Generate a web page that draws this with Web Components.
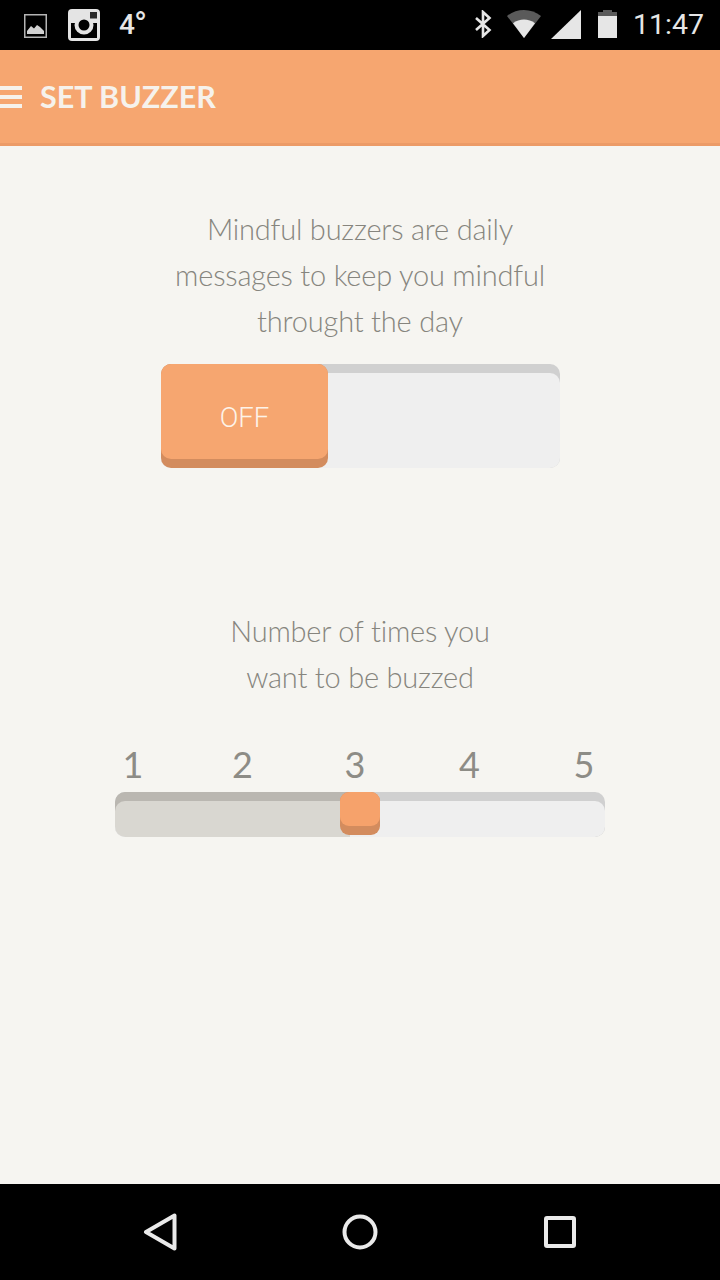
<!DOCTYPE html>
<html>
<head>
<meta charset="utf-8">
<title>Set Buzzer</title>
<style>
    html, body { margin: 0; padding: 0; background: #f6f5f1; }
    body { width: 720px; height: 1280px; overflow: hidden; }
</style>
</head>
<body>
<buzzer-screen>
    <status-bar></status-bar>
    <app-bar>SET BUZZER</app-bar>
    <main-area>
        <buzzer-message style="margin-top: 60px">Mindful buzzers are daily<br>messages to keep you mindful<br>throught the day</buzzer-message>
        <buzzer-toggle style="margin-top: 20px">OFF</buzzer-toggle>
        <buzzer-message style="margin-top: 140px">Number of times you<br>want to be buzzed</buzzer-message>
        <buzzer-slider style="margin-top: 38px"></buzzer-slider>
    </main-area>
    <nav-bar></nav-bar>
</buzzer-screen>
<script>
class BuzzerScreen extends HTMLElement {
    constructor() {
        super();
        this.attachShadow({ mode: 'open' });
        this.shadowRoot.innerHTML = `
            <style>
                :host {
                    display: flex;
                    flex-direction: column;
                    width: 720px;
                    height: 1280px;
                    background: #f6f5f1;
                }
            </style>
            <slot></slot>
        `;
    }
}

class StatusBar extends HTMLElement {
    constructor() {
        super();
        this.attachShadow({ mode: 'open' });
        this.shadowRoot.innerHTML = `
            <style>
                :host {
                    display: flex;
                    align-items: center;
                    height: 50px;
                    background: #000;
                    color: #e6e6e6;
                    font-family: Roboto, sans-serif;
                    flex: none;
                }
                svg { display: block; flex: none; }
                .left { display: flex; align-items: center; padding-left: 24px; }
                .temp { margin-left: 19px; font-size: 28px; font-weight: 500; line-height: 50px; white-space: nowrap; }
                .temp span { font-size: 35px; font-weight: 400; margin-left: -1px; line-height: 1; vertical-align: -3px; }
                .right { display: flex; align-items: center; margin-left: auto; padding-right: 16px; }
                .right svg { margin-top: -2px; }
                .time { margin-left: 16px; font-size: 28.5px; line-height: 50px; }
            </style>
            <div class="left">
                <svg width="23" height="24" viewBox="0 0 23 24" style="margin-top: 1px">
                    <rect x="0.75" y="0.75" width="21.5" height="22.5" fill="none" stroke="#b4b4b4" stroke-width="1.5"/>
                    <path d="M3 20v-3l4-5 3 2.500 3-3.500 3 2 4 4v3z" fill="#d2d2d2"/>
                </svg>
                <svg width="32" height="32" viewBox="0 0 32 32" style="margin-left: 21px">
                    <rect width="32" height="32" rx="4" fill="#e4e4e4"/>
                    <rect x="3" y="14" width="26" height="15" fill="#000"/>
                    <circle cx="16" cy="16" r="9.500" fill="#e4e4e4"/>
                    <circle cx="16" cy="16" r="5.500" fill="#000"/>
                    <rect x="22" y="3" width="7" height="6.500" fill="#2a2a2a"/>
                </svg>
                <span class="temp">4<span>°</span></span>
            </div>
            <div class="right">
                <svg width="18" height="28" viewBox="0 0 18 28">
                    <path d="M2 8l13.500 12L9 26V2l6.500 6L2 20" fill="none" stroke="#e6e6e6" stroke-width="2.600"/>
                </svg>
                <svg width="34" height="28" viewBox="0 0 34 28" style="margin-left: 15px">
                    <path d="M0 6C9.500-2 24.500-2 34 6L17 28z" fill="#5a5a5a"/>
                    <path d="M6 13.300c6.500-5 15.500-5 22 0L17 28z" fill="#e6e6e6"/>
                </svg>
                <svg width="30" height="29" viewBox="0 0 30 29" style="margin-left: 10px">
                    <path d="M30 0v29H0z" fill="#e6e6e6"/>
                </svg>
                <svg width="19" height="28" viewBox="0 0 19 28" style="margin-left: 17px">
                    <path d="M5 0h9v2H5z" fill="#5a5a5a"/>
                    <path d="M0 2h19v4H0z" fill="#5a5a5a"/>
                    <path d="M0 6h19v22H0z" fill="#e6e6e6"/>
                </svg>
                <span class="time">11:47</span>
            </div>
        `;
    }
}

class AppBar extends HTMLElement {
    constructor() {
        super();
        this.attachShadow({ mode: 'open' });
        this.shadowRoot.innerHTML = `
            <style>
                :host {
                    display: flex;
                    align-items: center;
                    gap: 18px;
                    height: 93px;
                    background: #f6a670;
                    border-bottom: 3px solid #ec9b67;
                    color: #f6f2ec;
                    font-family: Lato, sans-serif;
                    font-weight: 700;
                    font-size: 30.5px;
                    flex: none;
                }
                .menu { display: flex; flex-direction: column; gap: 5px; width: 22px; margin-top: 1px; }
                .menu i { display: block; height: 4px; background: #f6f2ec; }
                .label { margin-top: -2px; }
            </style>
            <div class="menu"><i></i><i></i><i></i></div>
            <div class="label"><slot></slot></div>
        `;
    }
}

class MainArea extends HTMLElement {
    constructor() {
        super();
        this.attachShadow({ mode: 'open' });
        this.shadowRoot.innerHTML = `
            <style>
                :host {
                    display: flex;
                    flex-direction: column;
                    align-items: center;
                    flex: 1;
                }
            </style>
            <slot></slot>
        `;
    }
}

class BuzzerMessage extends HTMLElement {
    constructor() {
        super();
        this.attachShadow({ mode: 'open' });
        this.shadowRoot.innerHTML = `
            <style>
                :host {
                    display: block;
                    text-align: center;
                    color: #86857e;
                    font-family: Lato, sans-serif;
                    font-weight: 300;
                    font-size: 29px;
                    letter-spacing: -0.2px;
                    line-height: 46px;
                    white-space: nowrap;
                }
            </style>
            <slot></slot>
        `;
    }
}

class BuzzerToggle extends HTMLElement {
    constructor() {
        super();
        this.attachShadow({ mode: 'open' });
        this.shadowRoot.innerHTML = `
            <style>
                :host {
                    display: block;
                    position: relative;
                    width: 399px;
                    height: 104px;
                    margin-left: 1px;
                    background: #d0d0d0;
                    border-radius: 10px;
                }
                .body {
                    position: absolute;
                    inset: 9px 0 0 0;
                    background: #efefef;
                    border-radius: 10px;
                }
                .knob {
                    position: absolute;
                    left: 0;
                    top: 0;
                    width: 167px;
                    height: 104px;
                    background: #d38c5e;
                    border-radius: 10px;
                }
                .face {
                    display: flex;
                    align-items: center;
                    justify-content: center;
                    height: 95px;
                    padding-top: 11px;
                    box-sizing: border-box;
                    background: #f6a670;
                    border-radius: 10px;
                    color: #fdf3e9;
                    font-family: Roboto, sans-serif;
                    font-weight: 300;
                    font-size: 27.5px;
                }
            </style>
            <div class="body"></div>
            <div class="knob"><div class="face"><slot></slot></div></div>
        `;
    }
}

class BuzzerSlider extends HTMLElement {
    constructor() {
        super();
        this.attachShadow({ mode: 'open' });
        this.shadowRoot.innerHTML = `
            <style>
                :host {
                    display: flex;
                    flex-direction: column;
                    width: 490px;
                    font-family: Lato, sans-serif;
                }
                .nums {
                    display: grid;
                    grid-template-columns: repeat(5, 40px);
                    justify-content: space-between;
                    height: 54px;
                    color: #8d8c86;
                    font-size: 36px;
                    line-height: 53px;
                    text-align: center;
                }
                .nums span:nth-child(1) { transform: translateX(-2px); }
                .nums span:nth-child(2) { transform: translateX(-5px); }
                .nums span:nth-child(3) { transform: translateX(-5px); }
                .nums span:nth-child(4) { transform: translateX(-3px); }
                .nums span:nth-child(5) { transform: translateX(-1px); }
                .wrap {
                    position: relative;
                    height: 45px;
                    background: #d0d0d0;
                    border-radius: 10px;
                    overflow: hidden;
                }
                .body {
                    position: absolute;
                    inset: 9px 0 0 0;
                    background: #efefef;
                    border-radius: 10px;
                }
                .fill-top {
                    position: absolute;
                    left: 0;
                    top: 0;
                    width: 235px;
                    height: 20px;
                    background: #bab7b1;
                }
                .fill {
                    position: absolute;
                    left: 0;
                    top: 9px;
                    bottom: 0;
                    width: 235px;
                    background: #d9d7d1;
                    border-radius: 10px 0 0 10px;
                }
                .thumb {
                    position: absolute;
                    left: 225px;
                    top: 0;
                    width: 40px;
                    height: 43px;
                    background: #d38c5e;
                    border-radius: 9px;
                }
                .thumb i {
                    display: block;
                    height: 34px;
                    background: #f6a26b;
                    border-radius: 9px;
                }
            </style>
            <div class="nums"><span>1</span><span>2</span><span>3</span><span>4</span><span>5</span></div>
            <div class="wrap">
                <div class="body"></div>
                <div class="fill-top"></div>
                <div class="fill"></div>
                <div class="thumb"><i></i></div>
            </div>
        `;
    }
}

class NavBar extends HTMLElement {
    constructor() {
        super();
        this.attachShadow({ mode: 'open' });
        this.shadowRoot.innerHTML = `
            <style>
                :host {
                    display: flex;
                    align-items: center;
                    justify-content: space-between;
                    height: 96px;
                    padding: 0 143px;
                    background: #000;
                    flex: none;
                }
                svg { display: block; }
            </style>
            <svg width="34" height="38" viewBox="0 0 34 38" fill="none" stroke="#eaeaea" stroke-width="4" stroke-linejoin="round">
                <path d="M3 19L31.500 2.500v33z"/>
            </svg>
            <svg width="36" height="36" viewBox="0 0 36 36" fill="none" stroke="#eaeaea" stroke-width="4">
                <circle cx="18" cy="18" r="15.500"/>
            </svg>
            <svg width="34" height="34" viewBox="0 0 34 34" fill="none" stroke="#eaeaea" stroke-width="4" stroke-linejoin="round">
                <rect x="3" y="3" width="28" height="28" rx="1"/>
            </svg>
        `;
    }
}

customElements.define('buzzer-screen', BuzzerScreen);
customElements.define('status-bar', StatusBar);
customElements.define('app-bar', AppBar);
customElements.define('main-area', MainArea);
customElements.define('buzzer-message', BuzzerMessage);
customElements.define('buzzer-toggle', BuzzerToggle);
customElements.define('buzzer-slider', BuzzerSlider);
customElements.define('nav-bar', NavBar);
</script>
</body>
</html>
